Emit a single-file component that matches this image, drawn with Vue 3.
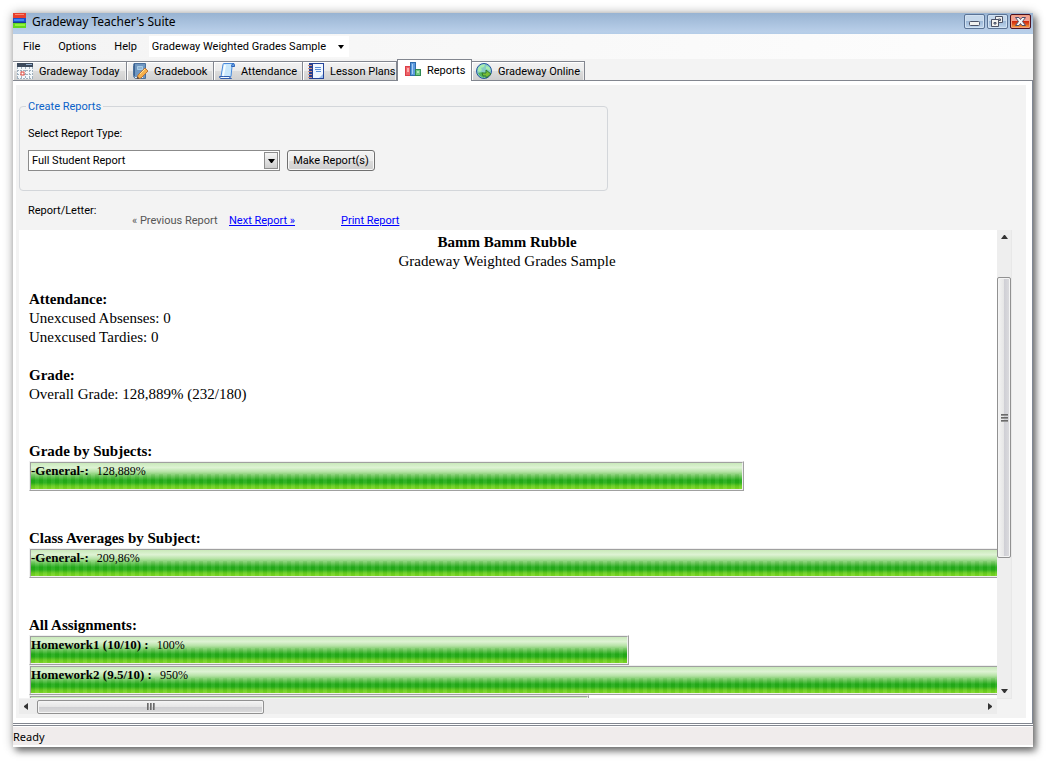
<script setup>
import { ref } from 'vue'

const course = ref('Gradeway Weighted Grades Sample')
const reportType = ref('Full Student Report')
const menus = ['File', 'Options', 'Help']
const tabs = [
  { id: 'today', label: 'Gradeway Today' },
  { id: 'gradebook', label: 'Gradebook' },
  { id: 'attendance', label: 'Attendance' },
  { id: 'lessons', label: 'Lesson Plans' },
  { id: 'reports', label: 'Reports' },
  { id: 'online', label: 'Gradeway Online' },
]
const active = ref('reports')
const sections = [
  { title: 'Grade by Subjects:', bars: [{ name: '-General-:', value: '128,889%', width: 715 }] },
  { title: 'Class Averages by Subject:', bars: [{ name: '-General-:', value: '209,86%', width: 1200 }] },
  {
    title: 'All Assignments:',
    bars: [
      { name: 'Homework1 (10/10) :', value: '100%', width: 600 },
      { name: 'Homework2 (9.5/10) :', value: '950%', width: 5700 },
      { name: '', value: '', width: 560 },
    ],
  },
]
</script>

<template>
  <div class="desktop">
    <div class="window">
      <header class="titlebar">
        <svg class="logo" width="14" height="16" viewBox="0 0 14 16">
          <rect width="13" height="5" fill="#e8402f" /><rect x="2" y="1" width="9" height="1" fill="#ff8a70" />
          <rect y="5" width="13" height="6" fill="#1e50c8" /><rect x="1" y="6" width="10" height="2" fill="#3f86f4" />
          <rect y="9" width="13" height="1" fill="#183a90" />
          <rect y="10" width="13" height="5" fill="#62d820" /><rect x="2" y="11" width="10" height="2" fill="#92f23c" />
        </svg>
        <h1>Gradeway Teacher's Suite</h1>
        <div class="winbtns">
          <button aria-label="Minimize">
            <svg width="19" height="13" viewBox="0 0 19 13"><rect x="4.500" y="6.500" width="10" height="4" rx="1" fill="#f2f2f0" stroke="#4c5266" /></svg>
          </button>
          <button aria-label="Restore">
            <svg width="19" height="13" viewBox="0 0 19 13" fill="#f2f2f0" stroke="#4c5266">
              <path d="M7.500 1.500h7v6h-7zM10.500 4h2v1.500h-2z" fill-rule="evenodd" />
              <path d="M3.500 4.500h7v7h-7zM6 7.500h2v1.500h-2z" fill-rule="evenodd" />
            </svg>
          </button>
          <button class="close" aria-label="Close">
            <svg width="19" height="13" viewBox="0 0 19 13"><path d="M4.500 2.500h3.500l1.500 2 1.500-2h3.500l-3 4 3 4h-3.500l-1.500-2-1.500 2h-3.500l3-4z" fill="#f5f5f5" stroke="#50506a" /></svg>
          </button>
        </div>
      </header>

      <nav class="menubar">
        <button v-for="m in menus" :key="m">{{ m }}</button>
        <span class="course">
          <select v-model="course" aria-label="Course"><option>Gradeway Weighted Grades Sample</option></select>
          <svg width="6" height="4" viewBox="0 0 6 4"><path d="M0 0h6l-3 4z" /></svg>
        </span>
      </nav>

      <div class="tabs" role="tablist">
        <button v-for="t in tabs" :key="t.id" role="tab" class="tab" :class="[t.id, { active: active === t.id }]" :aria-selected="active === t.id" @click="active = t.id">
          <svg v-if="t.id === 'today'" width="16" height="16" viewBox="0 0 16 16">
            <rect y="1" width="16" height="15" fill="#f4f8fb" /><rect y="0" width="16" height="4" fill="#3c4a5c" /><rect x="9" y="1" width="6" height="1" fill="#98b2d0" />
            <path d="M0 7.500h16M0 11.500h16M4.500 4v12M8.500 4v12M12.500 4v12M0 15.500h16M.5 4v12M15.500 4v12" stroke="#9fb0bd" stroke-dasharray="2 1" />
            <rect x="4" y="9" width="3" height="3" fill="#fff" stroke="#e04438" stroke-width="1" />
          </svg>
          <svg v-else-if="t.id === 'gradebook'" width="16" height="16" viewBox="0 0 16 16">
            <path d="M2 .5h11.500v15h-10q-2-1-2-3v-10z" fill="#6f96c0" stroke="#4a709c" /><path d="M2.500 1v12" stroke="#3c6291" />
            <path d="M5.500 3.500h5v3h-5z" fill="#8fb4d6" stroke="#a9cce4" /><path d="M3 14.500h8" stroke="#e5eef5" />
            <path d="M13 5l3 3-7 7-4 1 1-4z" fill="#f6b04a" stroke="#b8743a" /><path d="M8 11l5-5" stroke="#ffe49a" /><path d="M5.500 13.500l2 2-2.500.5z" fill="#40414b" />
          </svg>
          <svg v-else-if="t.id === 'attendance'" width="16" height="16" viewBox="0 0 16 16">
            <path d="M4 1.500q0-1 1-1h10v3h-2l-1 10H2z" fill="#c9e8fc" stroke="#4a8bdc" /><path d="M12.500 3.500q0-3 2-3 1 1 1 3z" fill="#6ba9ee" stroke="#2e62b6" />
            <path d="M.5 13.500h10q0 2 2 2H2q-1.500 0-1.500-2z" fill="#f1faff" stroke="#315eae" /><path d="M6 2L4 13" stroke="#f4fcff" stroke-width="2" />
          </svg>
          <svg v-else-if="t.id === 'lessons'" width="16" height="16" viewBox="0 0 16 16">
            <rect x="1.500" y=".5" width="14" height="15" fill="#f1f7ff" stroke="#24449a" /><rect x="2" y="0" width="3" height="16" fill="#263f8f" />
            <path d="M0 2.500h4M0 5.500h4M0 8.500h4M0 11.500h4M0 14.500h4" stroke="#d0917f" /><path d="M7 4.500h6M7 6.500h6M8 8.500h5" stroke="#5990d9" /><path d="M11 15l4-4v4z" fill="#9fc2ee" />
          </svg>
          <svg v-else-if="t.id === 'reports'" width="16" height="16" viewBox="0 0 16 16">
            <rect x=".5" y="4.500" width="5" height="9" fill="#ee6268" stroke="#db3f48" /><rect x="2" y="6" width="2" height="4" fill="#ffabab" />
            <rect x="5.500" y=".5" width="5" height="13" fill="#5e9bdf" stroke="#306cad" /><rect x="7" y="2" width="1" height="10" fill="#a8d1f5" />
            <rect x="10.500" y="7.500" width="5" height="6" fill="#72c985" stroke="#328951" /><rect x="12" y="9" width="2" height="2" fill="#b2e9b6" />
          </svg>
          <svg v-else width="16" height="16" viewBox="0 0 16 16">
            <circle cx="8" cy="8" r="7.500" fill="#86ccc4" stroke="#2454a0" />
            <path d="M2 5l3-3 4-1-1 3-3 1 1 2-2 2-2-1zM10 3l3 1 2 4-2-1-3-1z" fill="#a9edae" /><path d="M2 10l4-1 4 2-2 4-4-2z" fill="#53b65c" />
            <path d="M6 10h4V7l5 4-5 4v-2H7z" fill="#79bd37" stroke="#2d7833" />
          </svg>
          <span>{{ t.label }}</span>
        </button>
      </div>

      <main class="page">
        <div class="panel">
          <fieldset>
            <legend>Create Reports</legend>
            <label for="rtype">Select Report Type:</label>
            <div class="row">
              <span class="combo">
                <select id="rtype" v-model="reportType"><option>Full Student Report</option></select>
                <span class="drop"><svg width="7" height="4" viewBox="0 0 7 4"><path d="M0 0h7l-3 4h-1z" /></svg></span>
              </span>
              <button class="make">Make Report(s)</button>
            </div>
          </fieldset>

          <div class="pager">
            <span class="caption">Report/Letter:</span>
            <span class="prev">« Previous Report</span>
            <span class="next"><a href="#next">Next Report »</a></span>
            <a href="#print">Print Report</a>
          </div>

          <div class="viewer">
            <article class="report">
              <div class="heading"><h2>Bamm Bamm Rubble</h2><p>Gradeway Weighted Grades Sample</p></div>
              <section>
                <h3>Attendance:</h3>
                <p>Unexcused Absenses: 0</p>
                <p>Unexcused Tardies: 0</p>
              </section>
              <section class="grade">
                <h3>Grade:</h3>
                <p>Overall Grade: 128,889% (232/180)</p>
              </section>
              <section v-for="s in sections" :key="s.title" class="chart">
                <h3>{{ s.title }}</h3>
                <div v-for="(b, i) in s.bars" :key="i" class="bar" :style="{ width: b.width + 'px' }">
                  <div class="fill"><b>{{ b.name }}</b><span>{{ b.value }}</span></div>
                </div>
              </section>
            </article>
            <div class="vscroll">
              <svg class="arrow" width="7" height="4" viewBox="0 0 7 4"><path d="M0 4h7l-3-4h-1z" /></svg>
              <div class="before"></div>
              <div class="thumb"><i></i><i></i><i></i></div>
              <div class="after"></div>
              <svg class="arrow" width="7" height="4" viewBox="0 0 7 4"><path d="M0 0h7l-3 4h-1z" /></svg>
            </div>
            <div class="hscroll">
              <svg class="arrow" width="4" height="7" viewBox="0 0 4 7"><path d="M4 0v7l-4-3v-1z" /></svg>
              <div class="thumb"><i></i><i></i><i></i></div>
              <div class="track"></div>
              <svg class="arrow" width="4" height="7" viewBox="0 0 4 7"><path d="M0 0v7l4-3v-1z" /></svg>
            </div>
          </div>
        </div>
      </main>
      <footer class="status"><span>Ready</span></footer>
    </div>
  </div>
</template>

<style>
body { margin: 0; background: #fff; }
</style>

<style scoped>
* { box-sizing: border-box; }
h1, h2, h3, p { margin: 0; }
button, select { font: inherit; color: inherit; margin: 0; padding: 0; border-radius: 0; }
svg { display: block; flex: none; }
.desktop { height: 100vh; padding: 13px 15px 15px 13px; overflow: hidden; font: 11px/13px Roboto, "Liberation Sans", sans-serif; color: #000; }
.window { height: 100%; display: flex; flex-direction: column; background: #f3f3f3; box-shadow: 3px 4px 7px rgba(0, 0, 0, .5), 0 0 10px rgba(0, 0, 0, .3); }
.titlebar { flex: none; height: 21px; display: flex; align-items: flex-start; background: linear-gradient(#98b3d2, #b9cfe9 90%, #b3cce8); }
.titlebar h1 { flex: 1; margin-left: 5px; font: 12px/18px "Noto Sans", Tahoma, sans-serif; }
.winbtns { display: flex; gap: 2px; padding: 1px 2px 0 0; }
.winbtns button { width: 21px; height: 15px; border: 1px solid #5b7395; border-radius: 2px; background: linear-gradient(#c6d8eb 45%, #9db9d8 50%, #c0d6ee); box-shadow: inset 0 0 0 1px #d2e2f2; }
.winbtns .close { border-color: #4c1020; background: linear-gradient(#f2a294 45%, #cf2a10 50%, #e0501d 70%, #f8b648); box-shadow: inset 0 0 0 1px #f0a080; }
.menubar { flex: none; height: 25px; display: flex; align-items: center; padding-left: 10px; background: linear-gradient(90deg, #f4f4f4, #fdfdfd); }
.menubar button { border: 0; background: none; text-align: left; margin-right: 18px; }
.menubar button:nth-child(3) { margin-right: 12px; }
.course { position: relative; flex: none; width: 200px; height: 21px; background: #fff; }
.course select { appearance: none; border: 0; background: none; width: 100%; height: 21px; padding-left: 3px; }
.course svg { position: absolute; right: 5px; top: 9px; pointer-events: none; }
.tabs { flex: none; height: 22px; display: flex; align-items: flex-end; border-bottom: 1px solid #82868f; }
.tab { display: flex; align-items: center; gap: 6px; height: 19px; padding-left: 4px; border: 1px solid #82868f; border-left: 0; border-bottom: 0; background: linear-gradient(#f2f2f2, #ebebeb 50%, #dcdcdc 52%, #cfcfcf); white-space: nowrap; box-shadow: inset 1px 1px 0 #fff, inset -1px 0 0 #eee; }
.today { width: 114px; }
.gradebook { width: 87px; padding-left: 5px; }
.attendance { width: 89px; padding-left: 5px; }
.lessons { width: 94px; padding-left: 5px; }
.reports { width: 75px; padding-left: 7px; }
.online { width: 113px; padding-left: 4px; }
.tab.active { height: 22px; margin-bottom: -1px; padding-bottom: 1px; border-left: 1px solid #82868f; background: #fff; box-shadow: none; align-self: flex-end; }
.page { flex: 1; min-height: 0; display: flex; padding: 4px 6px 5px 3px; background: #fff; border-right: 1px solid #7f8794; }
.panel { flex: 1; min-width: 0; display: flex; flex-direction: column; padding: 15px 14px 4px 3px; background: #f3f3f3; }
fieldset { flex: none; width: 589px; max-width: 100%; margin: 0; padding: 0 6px 19px; border: 1px solid #d3d6da; border-radius: 4px; }
legend { padding: 0 2px; color: #0a62c8; }
fieldset label { display: block; margin: 14px 2px 10px; }
.row { display: flex; gap: 7px; padding-left: 2px; }
.combo { position: relative; width: 252px; height: 21px; }
.combo select { appearance: none; width: 100%; height: 21px; padding-left: 3px; border: 1px solid #8b8b8b; background: #fff; }
.drop { position: absolute; right: 2px; top: 2px; width: 14px; height: 17px; display: flex; align-items: center; justify-content: center; border: 1px solid #8d8d8d; background: linear-gradient(#f4f4f4, #cecece); pointer-events: none; }
.make { width: 88px; height: 21px; border: 1px solid #707070; border-radius: 3px; background: linear-gradient(#f3f3f3, #ebebeb 50%, #dcdcdc 52%, #cfcfcf); box-shadow: inset 0 0 0 1px #f8f8f8; white-space: nowrap; }
.pager { flex: none; display: flex; align-items: flex-end; height: 39px; padding: 0 0 3px 9px; }
.caption { width: 104px; padding-bottom: 10px; }
.prev { width: 97px; color: #555; }
.next { width: 112px; }
a { color: #00f; text-decoration: underline; }
.viewer { flex: 1; min-height: 0; display: grid; grid-template-columns: minmax(0, 1fr) 15px; grid-template-rows: minmax(0, 1fr) 15px; }
.report { overflow: hidden; margin-bottom: 1px; padding: 3px 0 0 10px; background: #fff; font: 15px/19px "Liberation Serif", "Times New Roman", serif; }
h2, h3 { font-size: 15px; line-height: 19px; font-weight: bold; }
.heading { text-align: center; padding-right: 12px; }
.report section { margin-top: 19px; }
.report .chart { margin-top: 38px; }
.bar { height: 30px; border: 1px solid; border-color: #f0f0f0 #a0a0a0 #a0a0a0 #f0f0f0; }
.fill { height: 28px; border: 1px solid; border-color: #a0a0a0 #f0f0f0 #f0f0f0 #a0a0a0; font-size: 12px; line-height: 16px; white-space: nowrap; background: repeating-linear-gradient(90deg, rgba(0, 90, 0, .06) 0 4px, rgba(255, 255, 255, .06) 4px 8px) 0 100% / 100% 15px no-repeat, linear-gradient(#c9e9ba 0, #def3d4 18%, #b5e2a5 34%, #6cc75a 50%, #23ab19 66%, #27ae18 76%, #67cc20 88%, #80da24); }
.fill b { font-size: 13px; }
.fill span { margin-left: 8px; }
.vscroll { display: flex; flex-direction: column; align-items: center; padding: 5px 0; background: #eeeeee; border: 1px solid #e8e8e8; border-width: 0 1px 1px 0; }
.vscroll .before { flex: 38 0 0; }
.vscroll .after { flex: 131 0 0; }
.vscroll .thumb { flex: 280 0 0; width: 14px; flex-direction: column; background: linear-gradient(90deg, #f4f4f4, #e6e6e6 48%, #cfcfd5 52%, #dcdcdf); }
.thumb { display: flex; align-items: center; justify-content: center; gap: 1px; border: 1px solid #919191; border-radius: 2px; box-shadow: inset 0 0 0 1px #f4f4f4; }
.thumb i { width: 7px; height: 2px; background: linear-gradient(#555, #aaa); }
.hscroll { display: flex; align-items: center; padding: 0 5px; background: #ececec; }
.hscroll .thumb { flex: 225 0 0; height: 14px; margin-left: 9px; background: linear-gradient(#f4f4f4, #e6e6e6 48%, #cfcfd2 52%, #dcdcdc); }
.hscroll .thumb i { width: 2px; height: 7px; background: linear-gradient(90deg, #555, #aaa); }
.track { flex: 722 0 0; }
.arrow { fill: #333; }
.status { flex: none; height: 24px; padding: 3px 0 2px; border-top: 1px solid #82868f; background: #fff; }
.status span { display: block; height: 18px; background: #f0ecec; font: 11px/20px "Noto Sans", Tahoma, sans-serif; }
.status::before { content: ""; display: block; height: 1px; margin: -2px 0 1px; background: #82868f; }
</style>
